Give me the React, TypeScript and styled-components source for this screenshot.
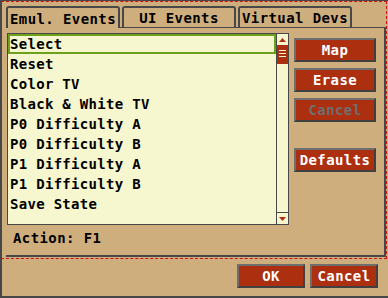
import styled, { createGlobalStyle } from 'styled-components'

const Global = createGlobalStyle`
  html, body {
    margin: 0;
    padding: 0;
    background: #cfae7e;
  }
  body {
    font-family: "DejaVu Sans Mono", "Liberation Mono", monospace;
    font-weight: bold;
    font-size: 14px;
    color: #000;
  }
`

const Dialog = styled.div`
  width: 388px;
  height: 298px;
  box-sizing: border-box;
  background: #cfae7e;
  border-left: 2px solid #474747;
  border-top: 1px solid #474747;
  border-bottom: 2px solid #474747;
  display: flex;
  flex-direction: column;
`

const TabArea = styled.div`
  margin-left: -1px;
  width: 386px;
  height: 258px;
  box-sizing: border-box;
  border: 1px dashed #d01010;
  display: flex;
  flex-direction: column;
`

const TabRow = styled.div`
  display: flex;
  gap: 2px;
  padding: 4px 0 0 4px;
  height: 21px;
  position: relative;
  z-index: 1;
`

const Tab = styled.div<{ $active?: boolean }>`
  width: 114px;
  height: ${p => (p.$active ? 22 : 21)}px;
  box-sizing: border-box;
  border: 2px solid #484848;
  border-bottom: none;
  border-radius: 3px 3px 0 0;
  background: #cfae7e;
  display: flex;
  align-items: center;
  justify-content: center;
  padding-top: 1px;
  letter-spacing: 0.4px;
`

const Panel = styled.div`
  margin-left: 4px;
  width: 380px;
  flex: 1;
  margin-bottom: 1px;
  box-sizing: border-box;
  border-top: 1px solid #484848;
  border-right: 2px solid #484848;
  border-bottom: 2px solid #484848;
  padding: 5px 0 0 1px;
  display: flex;
  flex-direction: column;
`

const Body = styled.div`
  display: flex;
`

const ListBox = styled.div`
  width: 282px;
  height: 192px;
  box-sizing: border-box;
  border: 1px solid #484848;
  background: #f6f6cf;
  display: flex;
`

const Items = styled.div`
  flex: 1;
  display: flex;
  flex-direction: column;
`

const Item = styled.div<{ $selected?: boolean }>`
  height: 20px;
  box-sizing: border-box;
  border: 2px solid ${p => (p.$selected ? '#6ea01e' : 'transparent')};
  padding-left: 0;
  display: flex;
  align-items: center;
  white-space: nowrap;
  letter-spacing: 0.3px;
`

const Scrollbar = styled.div`
  width: 11px;
  border-left: 1px solid #484848;
  display: flex;
  flex-direction: column;
`

const Arrow = styled.div<{ $down?: boolean }>`
  height: 11px;
  display: flex;
  align-items: center;
  justify-content: center;
  border-top: ${p => (p.$down ? '1px solid #484848' : 'none')};
  margin-top: ${p => (p.$down ? 'auto' : '0')};
`

const Thumb = styled.div`
  height: 19px;
  background: #ac2f10;
  display: flex;
  flex-direction: column;
  align-items: center;
  padding-top: 5px;
  box-sizing: border-box;
  gap: 2px;
`

const Grip = styled.div`
  width: 7px;
  height: 1px;
  background: #f6f6cf;
`

const ButtonColumn = styled.div`
  margin-left: 5px;
  padding-top: 5px;
  display: flex;
  flex-direction: column;
  gap: 6px;
`

const Button = styled.div<{ $disabled?: boolean; $w?: number; $gapTop?: number }>`
  width: ${p => p.$w ?? 82}px;
  height: 24px;
  box-sizing: border-box;
  border: 2px solid;
  border-color: #6e6e6e #404040 #404040 #6e6e6e;
  background: #ac2f10;
  color: ${p => (p.$disabled ? '#6e6e6e' : '#ffffff')};
  display: flex;
  align-items: center;
  justify-content: center;
  margin-top: ${p => p.$gapTop ?? 0}px;
  letter-spacing: 0.4px;
`

const Action = styled.div`
  padding: 6px 0 0 6px;
  line-height: 14px;
  letter-spacing: 0.4px;
`

const Footer = styled.div`
  flex: 1;
  display: flex;
  justify-content: flex-end;
  align-items: flex-start;
  gap: 5px;
  padding: 5px 10px 0 0;
`

const events = [
  'Select',
  'Reset',
  'Color TV',
  'Black & White TV',
  'P0 Difficulty A',
  'P0 Difficulty B',
  'P1 Difficulty A',
  'P1 Difficulty B',
  'Save State',
]

export default function App() {
  return (
    <>
      <Global />
      <Dialog>
        <TabArea>
          <TabRow>
            <Tab $active>Emul. Events</Tab>
            <Tab>UI Events</Tab>
            <Tab>Virtual Devs</Tab>
          </TabRow>
          <Panel>
            <Body>
              <ListBox>
                <Items>
                  {events.map((e, i) => (
                    <Item key={e} $selected={i === 0}>{e}</Item>
                  ))}
                </Items>
                <Scrollbar>
                  <Arrow>
                    <svg width="7" height="4" viewBox="0 0 7 4">
                      <path d="M3.5 0 L7 4 L0 4 Z" fill="#ac2f10" />
                    </svg>
                  </Arrow>
                  <Thumb>
                    <Grip />
                    <Grip />
                    <Grip />
                  </Thumb>
                  <Arrow $down>
                    <svg width="7" height="4" viewBox="0 0 7 4">
                      <path d="M0 0 L7 0 L3.5 4 Z" fill="#ac2f10" />
                    </svg>
                  </Arrow>
                </Scrollbar>
              </ListBox>
              <ButtonColumn>
                <Button>Map</Button>
                <Button>Erase</Button>
                <Button $disabled>Cancel</Button>
                <Button $gapTop={20}>Defaults</Button>
              </ButtonColumn>
            </Body>
            <Action>Action: F1</Action>
          </Panel>
        </TabArea>
        <Footer>
          <Button $w={68}>OK</Button>
          <Button $w={68}>Cancel</Button>
        </Footer>
      </Dialog>
    </>
  )
}
